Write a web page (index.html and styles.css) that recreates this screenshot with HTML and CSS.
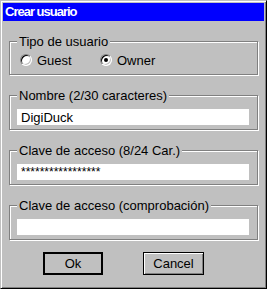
FILE: index.html
```html
<!DOCTYPE html>
<html lang="es">
<head>
  <meta charset="UTF-8" />
  <title>Crear usuario</title>
  <link rel="stylesheet" href="styles.css">
</head>
<body>

<div class="window">
  <div class="titlebar">Crear usuario</div>

  <div class="content">
    <!-- Tipo de usuario -->
    <fieldset class="group">
      <legend>Tipo de usuario</legend>
      <div class="radios">
        <label class="radio"><span class="dot"></span>Guest</label>
        <label class="radio checked"><span class="dot"></span>Owner</label>
      </div>
    </fieldset>

    <fieldset class="group">
      <legend>Nombre (2/30 caracteres)</legend>
      <input class="field" type="text" value="DigiDuck" />
    </fieldset>

    <fieldset class="group">
      <legend>Clave de acceso (8/24 Car.)</legend>
      <input class="field pass" type="text" value="*****************" />
    </fieldset>

    <fieldset class="group">
      <legend>Clave de acceso (comprobación)</legend>
      <input class="field" type="text" value="" />
    </fieldset>

    <div class="buttons">
      <button class="btn default">Ok</button>
      <button class="btn">Cancel</button>
    </div>
  </div>
</div>

</body>
</html>
```

FILE: styles.css
```css
body {
  margin: 0;
  background: #c0c0c0;
  font-family: "Liberation Sans", Arial, sans-serif;
  font-size: 13px;
  color: #000;
}

.window {
  width: 267px;
  height: 289px;
  box-sizing: border-box;
  padding: 2px;
  background: #c0c0c0;
  border: 1px solid;
  border-color: #c0c0c0 #000 #000 #c0c0c0;
  box-shadow: inset 1px 1px #fff, inset -1px -1px #808080;
}

.titlebar {
  height: 18px;
  line-height: 18px;
  padding-left: 2px;
  background: #0000ff;
  color: #fff;
  font-weight: bold;
  font-size: 13px;
  letter-spacing: -1px;
}

.content {
  padding: 13px 6px 0;
}

/* Group boxes */
.group {
  margin: 0;
  padding: 0 8px 0 7px;
  min-width: 0;
  border: 1px solid #808080;
  box-shadow: 1px 1px #fff, inset 1px 1px #fff;
}

.group + .group {
  margin-top: 13px;
}

.group legend {
  padding: 0 2px;
  line-height: 15px;
  background: #c0c0c0;
}

/* Radios */
.radios {
  display: flex;
  align-items: center;
  height: 16px;
  margin: 3px 0 6px 3px;
}

.radio {
  display: flex;
  align-items: center;
  gap: 5px;
  width: 80px;
}

.dot {
  display: flex;
  align-items: center;
  justify-content: center;
  width: 12px;
  height: 12px;
  box-sizing: border-box;
  border-radius: 50%;
  background: #fff;
  border: 1px solid;
  border-color: #808080 #fff #fff #808080;
  box-shadow: inset 1px 1px #000, inset -1px -1px #c0c0c0;
}

.radio.checked .dot::after {
  content: "";
  width: 4px;
  height: 4px;
  border-radius: 50%;
  background: #000;
}

/* Text fields */
.field {
  display: block;
  width: 100%;
  height: 16px;
  box-sizing: border-box;
  margin: 6px 0 4px;
  padding: 0 4px;
  border: 0;
  background: #fff;
  font: inherit;
  color: #000;
  outline: none;
}

.field.pass {
  font-size: 12px;
}

/* Buttons */
.buttons {
  display: flex;
  gap: 40px;
  margin: 12px 0 0 34px;
}

.btn {
  width: 61px;
  height: 23px;
  box-sizing: border-box;
  padding: 0;
  background: #c0c0c0;
  border: 1px solid #000;
  box-shadow: inset 1px 1px #fff, inset -1px -1px #808080;
  font: inherit;
  color: #000;
}

.btn.default {
  width: 60px;
  border-width: 2px;
  box-shadow: none;
}
```
